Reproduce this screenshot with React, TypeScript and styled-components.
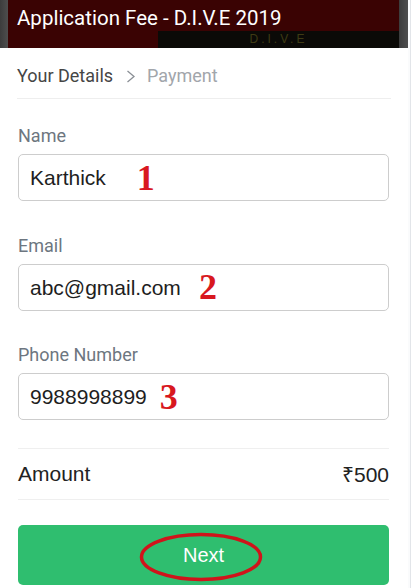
import styled, { createGlobalStyle } from 'styled-components'

const GlobalStyle = createGlobalStyle`
  html, body {
    margin: 0;
    padding: 0;
    background: #fff;
  }
  * {
    box-sizing: border-box;
  }
`

const fields = [
  { id: 'name', label: 'Name', value: 'Karthick', mark: '1', gap: 31 },
  { id: 'email', label: 'Email', value: 'abc@gmail.com', mark: '2', gap: 18 },
  { id: 'phone', label: 'Phone Number', value: '9988998899', mark: '3', gap: 13 },
]

const App = () => {
  return (
    <Page>
      <GlobalStyle />
      <Main>
        <Header>
          <Shade $w={8} />
          <Banner>
            <Title>Application Fee - D.I.V.E 2019</Title>
            <BannerStrip>D.I.V.E</BannerStrip>
          </Banner>
          <Shade $w={9} />
        </Header>

        <Body>
          <Crumbs>
            <Crumb>Your Details</Crumb>
            <Chevron width="10" height="13" viewBox="0 0 10 13">
              <path d="M1.5 1 L8 6.5 L1.5 12" fill="none" stroke="#8a8f95" strokeWidth="1.3" />
            </Chevron>
            <Crumb $muted>Payment</Crumb>
          </Crumbs>

          <Form>
            {fields.map((field) => (
              <FieldGroup key={field.id}>
                <Label>{field.label}</Label>
                <Field>
                  <Value>{field.value}</Value>
                  <Mark $gap={field.gap}>{field.mark}</Mark>
                </Field>
              </FieldGroup>
            ))}
          </Form>

          <AmountRow>
            <span>Amount</span>
            <span>₹500</span>
          </AmountRow>

          <NextButton type="button">
            Next
            <Circle width="124" height="50" viewBox="0 0 124 50">
              <ellipse cx="62" cy="25" rx="59.5" ry="22.5" fill="none" stroke="#d0141b" strokeWidth="3.5" />
            </Circle>
          </NextButton>
        </Body>
      </Main>
      <Rail />
    </Page>
  )
}

const Page = styled.div`
  display: flex;
  width: 414px;
  height: 588px;
  overflow: hidden;
  background: #fff;
`

const Main = styled.div`
  width: 408px;
  display: flex;
  flex-direction: column;
`

const Rail = styled.div`
  flex: 1;
  border-left: 2px solid #fafbfc;
  box-shadow: inset 1px 0 0 #e2e5e9;
`

const Header = styled.header`
  display: flex;
  height: 48px;
`

const Shade = styled.div<{ $w: number }>`
  width: ${(p) => p.$w}px;
  background: linear-gradient(90deg, #3c3c3c, #4e4e4e);
`

const Banner = styled.div`
  flex: 1;
  display: flex;
  flex-direction: column;
  background: #3a0303;
`

const Title = styled.h1`
  margin: 0;
  height: 31px;
  padding: 8px 0 0 9px;
  font-family: Roboto, 'Liberation Sans', sans-serif;
  font-weight: 400;
  font-size: 20.5px;
  line-height: 1;
  color: #fff;
  white-space: nowrap;
`

const BannerStrip = styled.div`
  flex: 1;
  margin-left: 150px;
  background: #0b0a07;
  color: #3e3a14;
  font-family: 'Liberation Sans', sans-serif;
  font-size: 12px;
  letter-spacing: 3px;
  line-height: 17px;
  text-align: center;
`

const Body = styled.div`
  flex: 1;
  padding: 0 19px 0 18px;
  display: flex;
  flex-direction: column;
`

const Crumbs = styled.nav`
  height: 51px;
  display: flex;
  align-items: center;
  border-bottom: 1px solid #eeeeee;
  margin-left: -1px;
  margin-right: -2px;
  padding-top: 5px;
`

const Crumb = styled.span<{ $muted?: boolean }>`
  font-family: Roboto, 'Liberation Sans', sans-serif;
  font-size: 18px;
  color: ${(p) => (p.$muted ? '#a2a6ab' : '#454545')};
`

const Chevron = styled.svg`
  margin: 2px 11px 0 13px;
`

const Form = styled.div`
  display: flex;
  flex-direction: column;
  gap: 33.5px;
  padding-top: 26px;
`

const FieldGroup = styled.div`
  display: flex;
  flex-direction: column;
`

const Label = styled.label`
  font-family: Roboto, 'Liberation Sans', sans-serif;
  font-size: 18px;
  line-height: 22px;
  color: #6d7680;
  margin-bottom: 7px;
`

const Field = styled.div`
  height: 47px;
  display: flex;
  align-items: center;
  border: 1px solid #cdcdcd;
  border-radius: 5px;
  padding-left: 11px;
`

const Value = styled.span`
  font-family: 'Liberation Sans', Arial, sans-serif;
  font-size: 21px;
  line-height: 1;
  color: #1e1e1e;
`

const Mark = styled.span<{ $gap: number }>`
  margin-left: ${(p) => p.$gap}px;
  font-family: 'Liberation Serif', 'Times New Roman', serif;
  font-weight: 700;
  font-size: 36px;
  line-height: 1;
  color: #d8181f;
`

const AmountRow = styled.div`
  margin-top: 28px;
  height: 52px;
  display: flex;
  align-items: center;
  justify-content: space-between;
  border-top: 1px solid #efefef;
  border-bottom: 1px solid #efefef;
  font-family: 'Liberation Sans', Arial, sans-serif;
  font-size: 21px;
  color: #222;
`

const NextButton = styled.button`
  position: relative;
  margin-top: 25px;
  height: 60px;
  width: 100%;
  border: none;
  border-radius: 5px;
  background: #2fbe6f;
  color: #fff;
  font-family: 'Liberation Sans', Arial, sans-serif;
  font-size: 20px;
`

const Circle = styled.svg`
  position: absolute;
  left: 121px;
  top: 7px;
`

export default App
